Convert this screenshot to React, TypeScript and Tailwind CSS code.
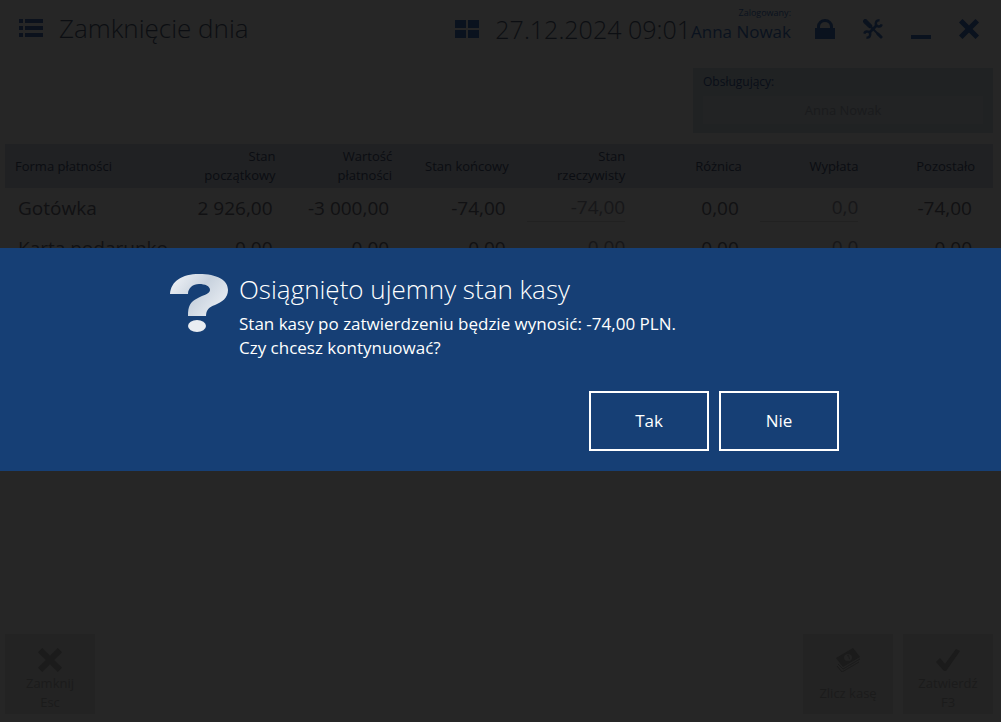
import type { ReactNode } from "react";

type Row = {
  name: string;
  opening: string;
  payments: string;
  closing: string;
  actual: string;
  difference: string;
  payout: string;
  left: string;
};

const rows: Row[] = [
  {
    name: "Gotówka",
    opening: "2 926,00",
    payments: "-3 000,00",
    closing: "-74,00",
    actual: "-74,00",
    difference: "0,00",
    payout: "0,0",
    left: "-74,00",
  },
  {
    name: "Karta podarunko",
    opening: "0,00",
    payments: "0,00",
    closing: "0,00",
    actual: "0,00",
    difference: "0,00",
    payout: "0,0",
    left: "0,00",
  },
];

const columns = [
  "Stan początkowy",
  "Wartość płatności",
  "Stan końcowy",
  "Stan rzeczywisty",
  "Różnica",
  "Wypłata",
  "Pozostało",
];

function ListIcon() {
  return (
    <svg viewBox="0 0 24 18" className="h-[18px] w-6" fill="currentColor">
      <path d="M0 0h4v4H0zM6 0h18v4H6zM0 7h4v4H0zM6 7h18v4H6zM0 14h4v4H0zM6 14h18v4H6z" />
    </svg>
  );
}

function TilesIcon() {
  return (
    <svg viewBox="0 0 24 18" className="h-[18px] w-6" fill="currentColor">
      <path d="M0 0h11v8H0zM13 0h11v8H13zM0 10h11v8H0zM13 10h11v8H13z" />
    </svg>
  );
}

function LockIcon() {
  return (
    <svg viewBox="0 0 20 20" className="h-5 w-5" fill="currentColor">
      <path d="M0 9h2V7.500a8 7.500 0 0 1 16 0V9h2v11H0zM5 9h10V7.500a5 4.500 0 0 0-10 0z" />
    </svg>
  );
}

function ToolsIcon() {
  return (
    <svg viewBox="0 0 20 20" className="h-5 w-5" fill="none" stroke="currentColor">
      <path d="M2.300 2.300 7 7" strokeWidth="4.500" strokeLinecap="round" />
      <path d="m7 7 9 9" strokeWidth="1.800" />
      <path d="m15 15 3 3" strokeWidth="3" strokeLinecap="round" />
      <path d="M14 6 6 14" strokeWidth="2.800" />
      <path d="M16.500 1.500a3 3 0 1 0 2.200 3.800" strokeWidth="2.400" />
      <path d="M1.300 14.700a3 3 0 1 1 2.200 3.800" strokeWidth="2.400" />
    </svg>
  );
}

function CloseIcon({ className }: { className: string }) {
  return (
    <svg viewBox="0 0 20 20" className={className} fill="currentColor">
      <path d="M3.500 0 10 6.500 16.500 0 20 3.500 13.500 10 20 16.500 16.500 20 10 13.500 3.500 20 0 16.500 6.500 10 0 3.500z" />
    </svg>
  );
}

function CashIcon() {
  return (
    <svg viewBox="0 0 24 24" className="h-6 w-6">
      <path d="M0 10 17 0l7 9L7 19z" fill="currentColor" />
      <path d="m2 16 5 5 17-10M1 18l5 6 17-10" fill="none" stroke="currentColor" />
      <ellipse cx="12" cy="9.500" rx="4" ry="3.500" fill="#232323" />
      <path d="m11 8 1.500-.8 1 4" fill="none" stroke="currentColor" />
    </svg>
  );
}

function CheckIcon() {
  return (
    <svg viewBox="0 0 24 24" className="h-6 w-6" fill="currentColor">
      <path d="m0 14 4-4 5 6L20 1l4 2L10 23H8z" />
    </svg>
  );
}

function QuestionIcon() {
  return (
    <svg viewBox="0 0 58 58" className="h-[58px] w-[58px] shrink-0">
      <defs>
        <linearGradient id="question" x1="0" y1="0" x2="1" y2="0.600">
          <stop offset="0" stopColor="#f4f6f9" />
          <stop offset="0.550" stopColor="#c8d2de" />
          <stop offset="1" stopColor="#e6ebf1" />
        </linearGradient>
      </defs>
      <path
        d="M0 20C1 7 12 0 29 0c18 0 29 6 29 16 0 8-6 12-13 15-6 2-9 5-9 11H18c0-10 2-14 10-18 5-3 12-4 12-8 0-4-5-6-11-6s-11 4-11 10z"
        fill="url(#question)"
      />
      <ellipse cx="27" cy="52" rx="9" ry="6" fill="#e9edf2" />
    </svg>
  );
}

function FooterButton({ icon, children }: { icon: ReactNode; children: ReactNode }) {
  return (
    <button
      type="button"
      className="flex h-20 w-[90px] flex-col items-center bg-[#232323] pt-[14px] text-[13px] leading-[19px] text-[#1b1b1b]"
    >
      {icon}
      {children}
    </button>
  );
}

function AmountInput({ label, value }: { label: string; value: string }) {
  return (
    <input
      aria-label={label}
      defaultValue={value}
      className="block h-7 w-full border-b border-[#212121] bg-transparent text-right text-[#171719]"
    />
  );
}

export default function App() {
  return (
    <div className="relative flex min-h-screen flex-col bg-[#262626] font-['Open_Sans','Noto_Sans',sans-serif] text-[#111113]">
      <header className="flex h-[60px] items-center pr-[22px] pl-[19px] text-[#0a121e]">
        <div className="flex items-center gap-4 pb-1">
          <button type="button" aria-label="Menu" className="text-[#0b111c]">
            <ListIcon />
          </button>
          <h1 className="text-[26px] font-light text-[#0c0e12]">Zamknięcie dnia</h1>
        </div>
        <button type="button" aria-label="Pulpit" className="ml-auto pb-[2px]">
          <TilesIcon />
        </button>
        <time className="ml-4 text-[25px] font-light text-[#0c0e12]">27.12.2024 09:01</time>
        <div className="flex h-full flex-col pt-2 text-right">
          <span className="text-[9px] leading-[10px]">Zalogowany:</span>
          <span className="text-[17px] leading-7">Anna Nowak</span>
        </div>
        <div className="ml-6 flex items-center gap-7 pb-[2px]">
          <button type="button" aria-label="Zablokuj">
            <LockIcon />
          </button>
          <button type="button" aria-label="Ustawienia">
            <ToolsIcon />
          </button>
          <button type="button" aria-label="Minimalizuj" className="flex h-5 items-end">
            <span className="h-1 w-5 bg-current" />
          </button>
          <button type="button" aria-label="Zamknij okno">
            <CloseIcon className="h-5 w-5" />
          </button>
        </div>
      </header>

      <main className="px-2 pt-2 pl-[5px]">
        <label className="ml-auto block h-[65px] w-[300px] bg-[#202223] px-[10px] pt-1 text-xs leading-5 text-[#090e18]">
          Obsługujący:
          <input
            readOnly
            defaultValue="Anna Nowak"
            className="mt-1 block h-7 w-full bg-[#222324] text-center text-[13px] text-[#1a1b1d]"
          />
        </label>

        <table className="mt-[11px] w-full table-fixed text-right">
          <thead>
            <tr className="h-11 bg-[#202123] text-[13px] leading-[19px] text-[#0b0d12]">
              <th className="w-[172px] pl-[10px] text-left font-normal">Forma płatności</th>
              {columns.map((column) => (
                <th key={column} className="pr-[18px] pl-3 font-normal">
                  {column}
                </th>
              ))}
            </tr>
          </thead>
          <tbody className="text-[19px]">
            {rows.map((row) => (
              <tr key={row.name} className="h-10">
                <td className="pl-[13px] text-left whitespace-nowrap">{row.name}</td>
                <td className="pr-[21px]">{row.opening}</td>
                <td className="pr-[21px]">{row.payments}</td>
                <td className="pr-[21px]">{row.closing}</td>
                <td className="pr-[18px]">
                  <AmountInput label={`Stan rzeczywisty: ${row.name}`} value={row.actual} />
                </td>
                <td className="pr-[21px]">{row.difference}</td>
                <td className="pr-[18px]">
                  <AmountInput label={`Wypłata: ${row.name}`} value={row.payout} />
                </td>
                <td className="pr-[21px]">{row.left}</td>
              </tr>
            ))}
          </tbody>
        </table>
      </main>

      <footer className="mt-auto flex gap-[10px] pr-2 pb-2 pl-[5px]">
        <FooterButton icon={<CloseIcon className="h-6 w-6" />}>
          <span className="mt-[2px]">Zamknij</span>
          <span>Esc</span>
        </FooterButton>
        <span className="grow" />
        <FooterButton icon={<CashIcon />}>
          <span className="mt-3">Zlicz kasę</span>
        </FooterButton>
        <FooterButton icon={<CheckIcon />}>
          <span className="mt-[2px]">Zatwierdź</span>
          <span>F3</span>
        </FooterButton>
      </footer>

      <div className="absolute inset-0 flex items-center pb-[3px]">
        <section
          role="alertdialog"
          aria-labelledby="dialog-title"
          className="w-full bg-[#163f75] pt-[22px] pb-5 text-white"
        >
          <div className="mx-auto max-w-[677px]">
            <div className="flex gap-[11px] pl-2">
              <span className="pt-1">
                <QuestionIcon />
              </span>
              <div className="text-[17px] leading-6">
                <h2 id="dialog-title" className="mb-1 text-[26px] leading-[38px] font-light">
                  Osiągnięto ujemny stan kasy
                </h2>
                <p>Stan kasy po zatwierdzeniu będzie wynosić: -74,00 PLN.</p>
                <p>Czy chcesz kontynuować?</p>
              </div>
            </div>
            <div className="mt-[31px] flex justify-end gap-[10px] text-[17px]">
              <button type="button" className="h-[60px] w-[120px] border-2 border-white">
                Tak
              </button>
              <button type="button" className="h-[60px] w-[120px] border-2 border-white">
                Nie
              </button>
            </div>
          </div>
        </section>
      </div>
    </div>
  );
}
